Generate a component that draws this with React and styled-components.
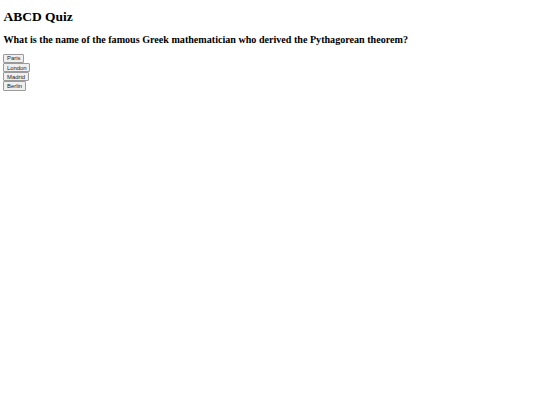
import React from "react";
import styled, { createGlobalStyle } from "styled-components";

const GlobalStyle = createGlobalStyle`
  body {
    margin: 3.4px;
    font-family: "Liberation Serif", "Times New Roman", serif;
    font-size: 6.75px;
    background: #ffffff;
    color: #000000;
  }
`;

const Title = styled.h1`
  font-size: 13.5px;
  font-weight: bold;
  margin: 6px 0 9px;
`;

const Question = styled.h2`
  font-size: 10.1px;
  font-weight: bold;
  margin: 8.4px 0;
`;

const Answers = styled.div`
  display: flex;
  flex-direction: column;
  align-items: flex-start;
`;

const AnswerButton = styled.button`
  font-family: "Liberation Sans", Arial, sans-serif;
  font-size: 5.9px;
  padding: 0.6px 2.6px;
  margin: 0;
  background: #efefef;
  color: #222;
  border: 1px solid #9a9a9a;
  border-radius: 1px;
  line-height: normal;
`;

const answers = ["Paris", "London", "Madrid", "Berlin"];

export default function App() {
  return (
    <>
      <GlobalStyle />
      <Title>ABCD Quiz</Title>
      <Question>
        What is the name of the famous Greek mathematician who derived the
        Pythagorean theorem?
      </Question>
      <Answers>
        {answers.map((a) => (
          <AnswerButton key={a}>{a}</AnswerButton>
        ))}
      </Answers>
    </>
  );
}
